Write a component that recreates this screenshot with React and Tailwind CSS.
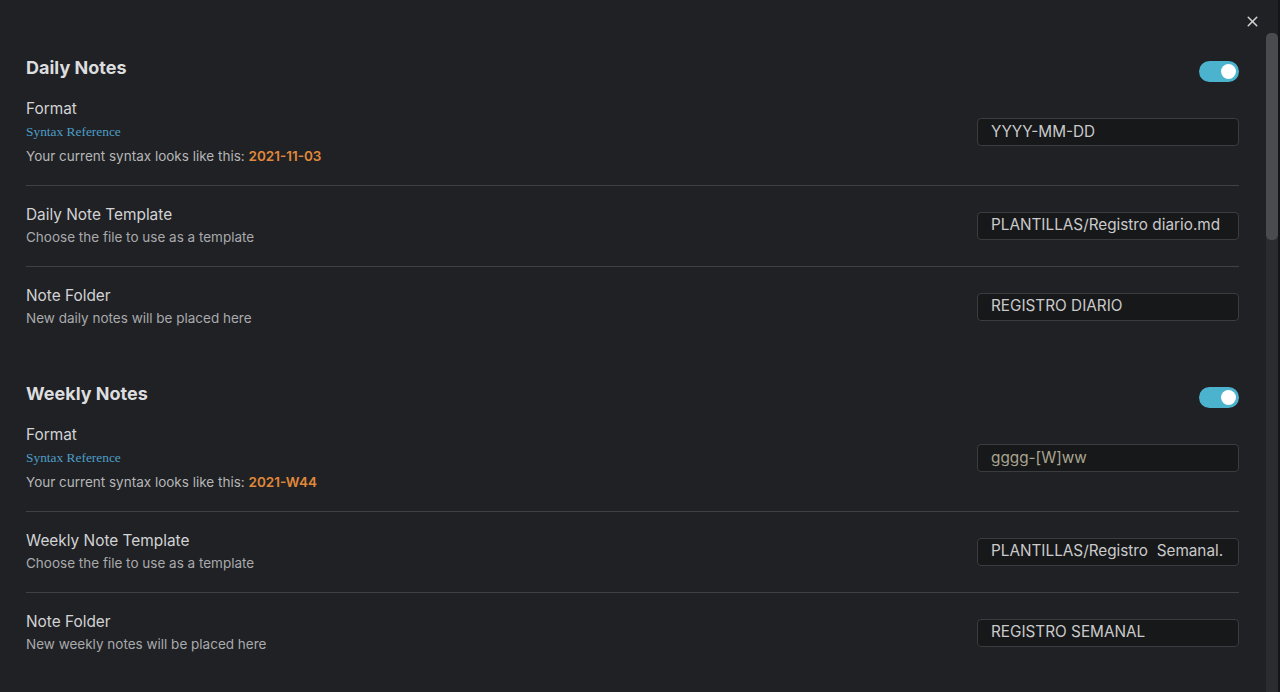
import React from 'react';
import { X } from 'lucide-react';

const Toggle = () => (
  <div className="mt-[5px] flex h-[21px] w-[40px] items-center justify-end rounded-full bg-[#4cb3cf] pr-[3px]">
    <div className="h-[15px] w-[15px] rounded-full bg-white" />
  </div>
);

const TextInput = ({ value, muted }) => (
  <div
    className={
      'flex h-[28px] w-[262px] shrink-0 items-center overflow-hidden whitespace-nowrap rounded-[4px] border border-[#3b3c3f] bg-[#17181a] px-[13px] text-[15.3px] ' +
      (muted ? 'text-[#a9a58f]' : 'text-[#cacaca]')
    }
  >
    {value}
  </div>
);

const FormatRow = ({ sample, value, muted }) => (
  <div className="flex items-center justify-between pb-[20px]">
    <div>
      <div className="text-[15.4px] leading-[20px] text-[#d2d3d5]">Format</div>
      <div className="mt-[4px] text-[13.4px] leading-[18px] text-[#4d9dc8] [font-family:'Liberation_Serif',serif]">
        Syntax Reference
      </div>
      <div className="mt-[6px] text-[13.5px] leading-[18px] text-[#b5b6b8]">
        Your current syntax looks like this:{' '}
        <span className="font-semibold text-[#e0883b]">{sample}</span>
      </div>
    </div>
    <TextInput value={value} muted={muted} />
  </div>
);

const SettingRow = ({ name, desc, value }) => (
  <div className="flex items-center justify-between border-t border-[#404144] pb-[20px] pt-[19px]">
    <div>
      <div className="text-[15.4px] leading-[20px] text-[#d2d3d5]">{name}</div>
      <div className="mt-[3px] text-[13.5px] leading-[18px] text-[#a9aaad]">{desc}</div>
    </div>
    <TextInput value={value} />
  </div>
);

const Section = ({ title, sample, format, muted, rows }) => (
  <div>
    <div className="flex items-start justify-between">
      <h2 className="mt-[1px] text-[18px] font-bold leading-[22px] text-[#dcdddf]">{title}</h2>
      <Toggle />
    </div>
    <div className="mt-[17px]">
      <FormatRow sample={sample} value={format} muted={muted} />
      {rows.map((r) => (
        <SettingRow key={r.name} {...r} />
      ))}
    </div>
  </div>
);

export default function App() {
  return (
    <div
      className="relative flex h-[692px] w-full overflow-hidden bg-[#202124]"
      style={{ fontFamily: 'Inter, "Noto Sans", sans-serif' }}
    >
      <div className="flex-1 pl-[26px] pr-[27px] pt-[56px]">
        <Section
          title="Daily Notes"
          sample="2021-11-03"
          format="YYYY-MM-DD"
          rows={[
            { name: 'Daily Note Template', desc: 'Choose the file to use as a template', value: 'PLANTILLAS/Registro diario.md' },
            { name: 'Note Folder', desc: 'New daily notes will be placed here', value: 'REGISTRO DIARIO' },
          ]}
        />
        <div className="mt-[35px]">
          <Section
            title="Weekly Notes"
            sample="2021-W44"
            format="gggg-[W]ww"
            muted
            rows={[
              { name: 'Weekly Note Template', desc: 'Choose the file to use as a template', value: 'PLANTILLAS/Registro\u00a0 Semanal.' },
              { name: 'Note Folder', desc: 'New weekly notes will be placed here', value: 'REGISTRO SEMANAL' },
            ]}
          />
        </div>
      </div>

      {/* scrollbar */}
      <div className="flex w-[12px] flex-col pt-[33px]">
        <div className="flex-1 rounded-t-[5px] bg-[#2b2c2f]">
          <div className="h-[207px] rounded-[5px] bg-[#4a4b4e]" />
        </div>
      </div>
      <div className="w-[2px] bg-[#141516]" />

      <button className="absolute right-[19px] top-[13px] text-[#d0d0d0]">
        <X size={17} strokeWidth={2.2} />
      </button>
    </div>
  );
}
